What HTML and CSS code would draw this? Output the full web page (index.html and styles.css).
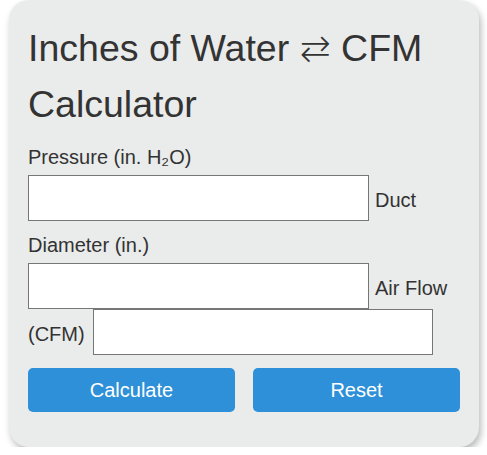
FILE: index.html
```html
<!DOCTYPE html>
<html lang="en">
<head>
<meta charset="utf-8">
<title>Inches of Water ⇄ CFM Calculator</title>
<link rel="stylesheet" href="styles.css">
</head>
<body>
<div class="card">
  <h1 class="title">Inches of Water <span class="arrow">⇄</span> CFM Calculator</h1>
  <form class="form">
    <div class="label-row">Pressure (in. H₂O)</div>
    <div class="field-row">
      <input class="field" type="text" aria-label="Pressure">
      <span class="after">Duct</span>
    </div>
    <div class="label-row gap-top">Diameter (in.)</div>
    <div class="field-row">
      <input class="field" type="text" aria-label="Duct diameter">
      <span class="after">Air Flow</span>
    </div>
    <div class="field-row tight">
      <span class="before">(CFM)</span>
      <input class="field narrow" type="text" aria-label="Air flow">
    </div>
    <div class="buttons">
      <button type="button" class="btn">Calculate</button>
      <button type="reset" class="btn">Reset</button>
    </div>
  </form>
</div>
</body>
</html>
```

FILE: styles.css
```css
html, body {
  margin: 0;
  padding: 0;
  background: #ffffff;
}

body {
  font-family: "Liberation Sans", Arial, "DejaVu Sans", sans-serif;
  color: #333333;
}

.card {
  box-sizing: border-box;
  width: 470px;
  height: 447px;
  margin-left: 9px;
  padding: 20px 19px 35px 19px;
  background: #eaebeb;
  border-radius: 20px;
  box-shadow: 2px 4px 7px rgba(0, 0, 0, 0.28);
}

.title {
  margin: 0;
  font-size: 37.5px;
  font-weight: normal;
  line-height: 56px;
  color: #333333;
}

.arrow {
  font-family: "DejaVu Sans", sans-serif;
  font-weight: 200;
  font-size: 37px;
  line-height: 1;
}

.form {
  margin: 0;
  font-size: 20px;
}

.label-row {
  line-height: 24px;
  margin-top: 13px;
  margin-bottom: 6px;
}

.label-row.gap-top {
  margin-top: 12px;
}

.field-row {
  display: flex;
  align-items: center;
  gap: 6px;
  height: 46px;
}

.field-row.tight {
  gap: 8px;
}

.after, .before {
  line-height: 24px;
  padding-top: 4px;
  white-space: nowrap;
}

.field {
  box-sizing: border-box;
  width: 341px;
  height: 46px;
  margin: 0;
  padding: 0 10px;
  border: 1px solid #767676;
  border-radius: 0;
  background: #ffffff;
  font-family: inherit;
  font-size: 20px;
}

.field.narrow {
  width: 340px;
}

.buttons {
  display: grid;
  grid-template-columns: 1fr 1fr;
  column-gap: 18px;
  margin-top: 13px;
}

.btn {
  height: 44px;
  margin: 0;
  padding: 0;
  border: none;
  border-radius: 5px;
  background: #2d90d8;
  color: #ffffff;
  font-family: inherit;
  font-size: 20px;
  line-height: 23px;
  cursor: pointer;
}
```
